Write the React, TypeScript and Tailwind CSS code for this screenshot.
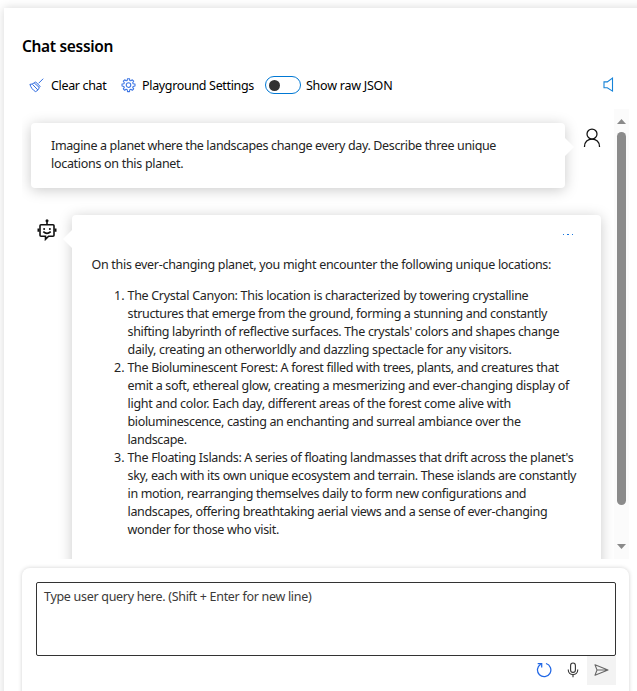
import React from "react";

type Line = { text: string; track: string };

const prompt: Line[] = [
  { text: "Imagine a planet where the landscapes change every day. Describe three unique", track: "tracking-[-0.355px]" },
  { text: "locations on this planet.", track: "tracking-[-0.3px]" },
];

const places: Line[][] = [
  [
    { text: "The Crystal Canyon: This location is characterized by towering crystalline", track: "tracking-[-0.31px]" },
    { text: "structures that emerge from the ground, forming a stunning and constantly", track: "tracking-[-0.355px]" },
    { text: "shifting labyrinth of reflective surfaces. The crystals' colors and shapes change", track: "tracking-[-0.335px]" },
    { text: "daily, creating an otherworldly and dazzling spectacle for any visitors.", track: "tracking-[-0.31px]" },
  ],
  [
    { text: "The Bioluminescent Forest: A forest filled with trees, plants, and creatures that", track: "tracking-[-0.335px]" },
    { text: "emit a soft, ethereal glow, creating a mesmerizing and ever-changing display of", track: "tracking-[-0.305px]" },
    { text: "light and color. Each day, different areas of the forest come alive with", track: "tracking-[-0.27px]" },
    { text: "bioluminescence, casting an enchanting and surreal ambiance over the", track: "tracking-[-0.36px]" },
    { text: "landscape.", track: "tracking-[-0.36px]" },
  ],
  [
    { text: "The Floating Islands: A series of floating landmasses that drift across the planet's", track: "tracking-[-0.33px]" },
    { text: "sky, each with its own unique ecosystem and terrain. These islands are constantly", track: "tracking-[-0.345px]" },
    { text: "in motion, rearranging themselves daily to form new configurations and", track: "tracking-[-0.345px]" },
    { text: "landscapes, offering breathtaking aerial views and a sense of ever-changing", track: "tracking-[-0.335px]" },
    { text: "wonder for those who visit.", track: "tracking-[-0.3px]" },
  ],
];

function Lines({ lines }: { lines: Line[] }) {
  return (
    <>
      {lines.map((l) => (
        <span key={l.text} className={`block whitespace-nowrap ${l.track}`}>{l.text}</span>
      ))}
    </>
  );
}

function BroomIcon() {
  return (
    <svg className="h-[15px] w-[15px]" viewBox="0 0 15 15" fill="none" stroke="#2f6be0" strokeWidth="1">
      <path d="M14.200 .7 9.600 5.300M5.200 4.900C4 5.900 2.400 6.300.9 6.400c1.100 3.300 2.800 5.600 5.600 7.200 2.200-.9 3.200-2.300 3.700-4.200M6.600 3.900l4.500 4.500-.9 1L5.200 4.900zM3.400 6.300l5.400 5.600" />
    </svg>
  );
}

function GearIcon() {
  return (
    <svg className="h-[15px] w-[15px]" viewBox="0 0 15 15" fill="none" stroke="#3b74e4" strokeWidth="1.050" strokeLinejoin="round">
      <path d="M6.500.7h2l.3 1.700 1 .4 1.500-1 1.400 1.400-1 1.500.4 1 1.900.4v1.900l-1.900.4-.4 1 1 1.500-1.400 1.400-1.500-1-1 .4-.3 1.900h-2l-.3-1.900-1-.4-1.500 1-1.400-1.400 1-1.500-.4-1L1 8V6.100l1.900-.4.4-1-1-1.500 1.400-1.400 1.500 1 1-.4z" />
      <circle cx="7.500" cy="7.100" r="2.300" />
    </svg>
  );
}

function SpeakerIcon() {
  return (
    <svg className="h-4 w-[11px]" viewBox="0 0 11 16" fill="none" stroke="#1683d8" strokeWidth="1.100">
      <path d="M1 4.900h3.300L9.500 1.100v13L4.300 10.800H1z" />
    </svg>
  );
}

function PersonIcon() {
  return (
    <svg className="h-5 w-[18px]" viewBox="0 0 18 20" fill="none" stroke="#111" strokeWidth="1.250">
      <circle cx="9" cy="6" r="5" />
      <path d="M1.500 19v-.6C1.500 14 4.800 11 9 11s7.500 3 7.500 7.400v.6" />
    </svg>
  );
}

function BotIcon() {
  return (
    <svg className="h-[22px] w-5" viewBox="0 0 20 22" fill="none" stroke="#111" strokeWidth="1.600">
      <path d="M10 2v4M4 5.800h12a1 1 0 0 1 1 1v9.400a1 1 0 0 1-1 1h-4.400L8.500 20.300v-3.100H4a1 1 0 0 1-1-1V6.800a1 1 0 0 1 1-1zM6.300 12.700q3.700 3.300 7.400 0" />
      <path d="M1.500 9.500v3.300M18.500 9.500v3.300" strokeWidth="2" />
      <circle cx="10" cy="1.800" r="1.500" fill="#111" stroke="none" />
      <circle cx="7.100" cy="10" r="1" fill="#111" stroke="none" />
      <circle cx="12.900" cy="10" r="1" fill="#111" stroke="none" />
    </svg>
  );
}

function RefreshIcon() {
  return (
    <svg className="h-4 w-4" viewBox="0 0 16 16" fill="none" stroke="#2167e5" strokeWidth="1.250">
      <path d="M10 1.500A6.700 6.700 0 1 1 4.700 2.200M1.700 1.600h4v4" />
    </svg>
  );
}

function MicIcon() {
  return (
    <svg className="h-4 w-3" viewBox="0 0 12 16" fill="none" stroke="#333" strokeWidth="1.100">
      <rect x="3.600" y="1" width="4.800" height="9.400" rx="2.400" />
      <path d="M1.300 7.500v.8a4.700 4.200 0 0 0 9.400 0v-.8M6 12.500V15.300" />
    </svg>
  );
}

function SendIcon() {
  return (
    <svg className="h-3 w-[15px]" viewBox="0 0 15 12" fill="none" stroke="#666" strokeWidth="1.050" strokeLinejoin="round">
      <path d="M1 .8 14 6 1 11.200 3 6zM3 6h11" />
    </svg>
  );
}

export default function App() {
  return (
    <div className="h-[691px] w-[637px] overflow-hidden bg-white pl-1 pt-2 font-['Noto_Sans','Open_Sans',sans-serif] text-[12.500px] leading-[18px] text-[#242424]">
      <main className="flex h-[700px] w-[650px] flex-col bg-white pl-[18px] shadow-[0_0_9px_rgba(0,0,0,0.16)]">
        <h1 className="mt-[27px] h-[22px] whitespace-nowrap text-[15.500px] font-semibold leading-[22px] tracking-[-0.330px] text-black">Chat session</h1>

        <div className="mt-[10px] flex h-9 w-[607px] items-center text-[12.500px] text-black">
          <button className="ml-[7px] flex w-[92px] items-center whitespace-nowrap">
            <BroomIcon />
            <span className="ml-[7px] pt-[2px] tracking-[-0.340px]">Clear chat</span>
          </button>
          <button className="flex w-[144px] items-center whitespace-nowrap">
            <GearIcon />
            <span className="ml-[6px] pt-[2px] tracking-[-0.330px]">Playground Settings</span>
          </button>
          <span className="flex h-[18px] w-9 items-center rounded-full border border-[#0078d4] pl-[3px]">
            <span className="h-[11px] w-[11px] rounded-full bg-[#333]" />
          </span>
          <span className="ml-[5px] whitespace-nowrap pt-[2px] tracking-[-0.240px]">Show raw JSON</span>
          <span className="ml-auto mr-[15px]"><SpeakerIcon /></span>
        </div>

        <section className="mt-[6px] flex h-[450px] w-[607px] shrink-0 overflow-hidden">
          <div className="w-[592px] overflow-hidden">
            <div className="flex pl-[9px] pt-[14px]">
              <div className="relative h-[65px] w-[534px] rounded bg-white pl-5 pt-[14px] shadow-[0_2px_14px_rgba(0,0,0,0.21)]">
                <Lines lines={prompt} />
                <span className="absolute -right-[9px] top-[15px] h-[18px] w-[9px] bg-white [clip-path:polygon(0_0,100%_50%,0_100%)]" />
              </div>
              <span className="ml-[18px] mt-[5px]"><PersonIcon /></span>
            </div>
            <div className="mt-[27px] flex pl-[15px]">
              <span className="mt-[4px]"><BotIcon /></span>
              <div className="relative ml-[15px] h-[380px] w-[529px] rounded bg-white pl-[19px] shadow-[0_2px_14px_rgba(0,0,0,0.21)]">
                <span className="absolute -left-[9px] top-[15px] h-[18px] w-[9px] bg-white [clip-path:polygon(100%_0,0_50%,100%_100%)]" />
                <div className="flex h-[41px] justify-end gap-[3px] pr-[28px] pt-[19px]">
                  <i className="h-px w-[1.500px] bg-[#1b78df]" />
                  <i className="h-px w-[1.500px] bg-[#1b78df]" />
                  <i className="h-px w-[1.500px] bg-[#1b78df]" />
                </div>
                <p className="whitespace-nowrap pl-[0.500px] tracking-[-0.3px]">On this ever-changing planet, you might encounter the following unique locations:</p>
                <ol className="mt-[13px] pl-[0.500px]">
                  {places.map((lines, i) => (
                    <li key={i} className="flex">
                      <span className="w-9 shrink-0 pr-[3px] text-right">{i + 1}.</span>
                      <div><Lines lines={lines} /></div>
                    </li>
                  ))}
                </ol>
              </div>
            </div>
          </div>
          <div className="flex w-[15px] flex-col items-center bg-[#fbfbfb]">
            <span className="mt-[10px] h-[5px] w-[9px] bg-[#8a8a8a] [clip-path:polygon(50%_0,100%_100%,0_100%)]" />
            <span className="mt-2 h-[373px] w-[9px] rounded-full bg-[#8b8b8b]" />
            <span className="mt-[39px] h-[5px] w-[9px] bg-[#8a8a8a] [clip-path:polygon(0_0,100%_0,50%_100%)]" />
          </div>
        </section>

        <section className="mt-[9px] h-[140px] w-[607px] shrink-0 rounded-lg bg-white px-[14px] pt-[14px] shadow-[0_0_4px_rgba(0,0,0,0.18)]">
          <div className="h-[74px] w-[580px] rounded-[2px] border border-[#333] pl-[7px] pt-[5px] text-[#3b3a39]">
            <span className="block whitespace-nowrap tracking-[-0.3px]">Type user query here. (Shift + Enter for new line)</span>
          </div>
          <div className="flex h-[29px] w-[580px] items-center justify-end">
            <span className="-mt-[2px]"><RefreshIcon /></span>
            <span className="-mt-[2px] ml-[15px] mr-[8px]"><MicIcon /></span>
            <span className="flex h-[29px] w-[29px] items-center justify-center bg-[#f3f3f3] pb-[2px] pr-[1px]"><SendIcon /></span>
          </div>
        </section>
      </main>
    </div>
  );
}
